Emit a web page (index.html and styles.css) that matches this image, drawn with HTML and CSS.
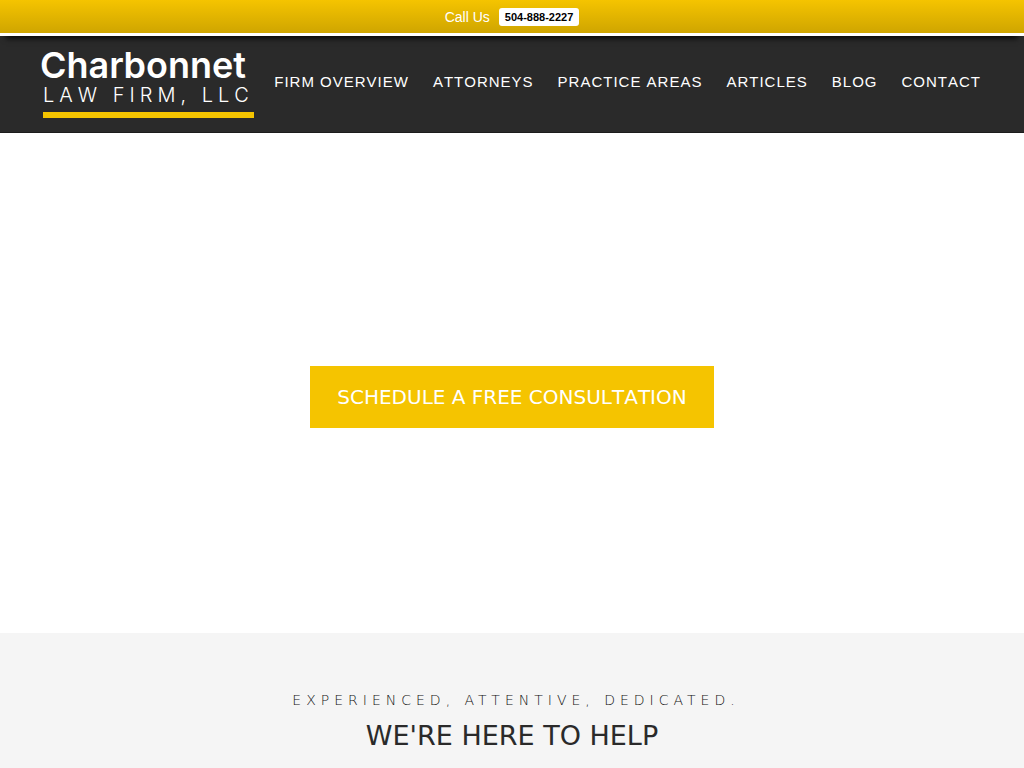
FILE: index.html
```
<!DOCTYPE html>
<html lang="en">
<head>
  <meta charset="UTF-8">
  <meta name="viewport" content="width=device-width, initial-scale=1.0">
  <title>Charbonnet Law Firm, LLC</title>
  <link rel="stylesheet" href="styles.css">
</head>
<body>
  <div class="call-bar">
    <span>Call Us</span>
    <a class="phone" href="tel:504-888-2227">504-888-2227</a>
  </div>
  <header class="header">
    <a class="logo" href="#">
      <span class="logo-name">Charbonnet</span>
      <span class="logo-sub">LAW FIRM, LLC</span>
    </a>
    <nav class="nav">
      <a href="#">FIRM OVERVIEW</a>
      <a href="#">ATTORNEYS</a>
      <a href="#">PRACTICE AREAS</a>
      <a href="#">ARTICLES</a>
      <a href="#">BLOG</a>
      <a href="#">CONTACT</a>
    </nav>
  </header>
  <main>
    <section class="hero">
      <a class="cta" href="#">SCHEDULE A FREE CONSULTATION</a>
    </section>
    <section class="intro">
      <p class="tagline">EXPERIENCED, ATTENTIVE, DEDICATED.</p>
      <h1>WE'RE HERE TO HELP</h1>
    </section>
  </main>
</body>
</html>
```
FILE: styles.css
```
* {
  box-sizing: border-box;
}
body {
  margin: 0;
  background: white;
  font-family: "DejaVu Sans", sans-serif;
  font-kerning: none;
}
a {
  color: inherit;
  text-decoration: none;
}
.call-bar {
  position: relative;
  display: flex;
  justify-content: center;
  align-items: center;
  gap: 9px;
  height: 36px;
  border-bottom: 3px solid white;
  background: linear-gradient(#f5c400, #cfa500) padding-box;
  box-shadow: 0 8px 6px -6px black;
  color: white;
  font-family: "Liberation Sans", sans-serif;
  font-size: 14px;
}
.phone {
  padding: 0 6px;
  border-radius: 3px;
  background: white;
  color: black;
  font-size: 11px;
  font-weight: bold;
  line-height: 18px;
}
.header {
  display: flex;
  justify-content: space-between;
  align-items: center;
  min-height: 97px;
  padding: 0 43px 4px 40px;
  border-bottom: 1px solid #1c1c1c;
  background: #2a2a2a;
  color: white;
}
.logo {
  display: flex;
  flex-direction: column;
  font-family: Inter, sans-serif;
  white-space: nowrap;
}
.logo-name {
  font-size: 36px;
  font-weight: 600;
  line-height: 36px;
}
.logo-sub {
  padding: 0 0 5px;
  border-bottom: 6px solid #f5c400;
  margin-left: 3px;
  font-size: 20px;
  font-weight: 300;
  line-height: 24px;
  letter-spacing: 5px;
}
.nav {
  display: flex;
  gap: 24px;
  font-family: "Liberation Sans", sans-serif;
  font-size: 15px;
  line-height: 24px;
  letter-spacing: 1px;
  white-space: nowrap;
}
.hero {
  display: flex;
  justify-content: center;
  align-items: center;
  min-height: 500px;
  padding-top: 28px;
}
.cta {
  padding: 16px 27px;
  background: #f5c400;
  color: white;
  font-size: 20px;
  line-height: 30px;
}
.intro {
  padding: 56px 20px;
  background: #f5f5f5;
  text-align: center;
}
.tagline {
  margin: 0;
  padding-left: 8px;
  color: #111;
  font-size: 14px;
  font-weight: 200;
  font-kerning: normal;
  line-height: 22px;
  letter-spacing: 5px;
}
h1 {
  margin: 7px 0 0;
  color: #2a2a2a;
  font-size: 27px;
  font-weight: normal;
  line-height: 36px;
}
```
